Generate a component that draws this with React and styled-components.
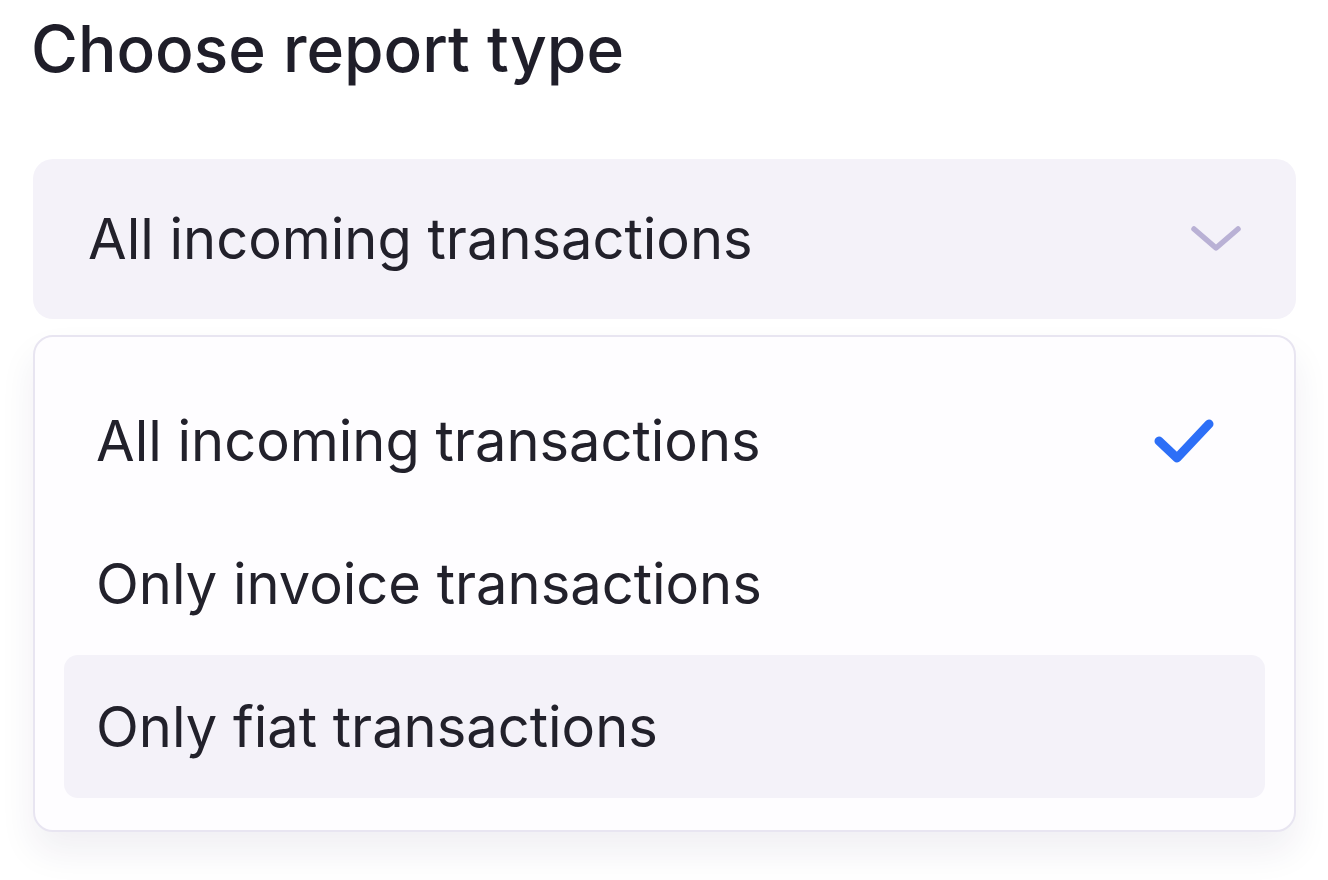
import styled, { createGlobalStyle } from 'styled-components'

const Global = createGlobalStyle`
  body {
    margin: 0;
    background: #ffffff;
    font-family: Inter, "Noto Sans", sans-serif;
    color: #22212b;
  }
`

const Page = styled.div`
  padding: 10px 32px 60px 33px;
  width: 1263px;
`

const Title = styled.h1`
  margin: 0 0 72px -2px;
  font-size: 64px;
  line-height: 77px;
  font-weight: 500;
  color: #1f1e29;
  letter-spacing: 0;
`

const Select = styled.div`
  display: flex;
  align-items: center;
  justify-content: space-between;
  height: 160px;
  padding: 0 54px 0 55px;
  border-radius: 20px;
  background: #f4f2f9;
  font-size: 56px;
`

const Menu = styled.div`
  margin-top: 16px;
  padding: 32px 29px;
  border: 2px solid #e8e5f1;
  border-radius: 20px;
  background: #fefdff;
  box-shadow: 0 20px 36px rgba(40, 30, 90, 0.07);
`

const Item = styled.div`
  display: flex;
  align-items: center;
  justify-content: space-between;
  height: 143px;
  padding: 0 51px 0 32px;
  border-radius: 14px;
  font-size: 56px;
  background: ${p => (p.$hover ? '#f4f2f9' : 'transparent')};
`

const Chevron = () => (
  <svg width="52" height="28" viewBox="0 0 52 28" fill="none">
    <path d="M4 4 L26 23 L48 4" stroke="#b9b1d5" strokeWidth="5.5" strokeLinecap="round" strokeLinejoin="round" />
  </svg>
)

const Check = () => (
  <svg width="60" height="44" viewBox="0 0 60 44" fill="none">
    <path d="M5 22 L23 39 L55 5" stroke="#2d6ff7" strokeWidth="9" strokeLinecap="round" strokeLinejoin="round" />
  </svg>
)

const options = [
  { label: 'All incoming transactions', selected: true },
  { label: 'Only invoice transactions' },
  { label: 'Only fiat transactions', hover: true },
]

export default function App() {
  return (
    <Page>
      <Global />
      <Title>Choose report type</Title>
      <Select>
        <span>All incoming transactions</span>
        <Chevron />
      </Select>
      <Menu>
        {options.map(o => (
          <Item key={o.label} $hover={o.hover}>
            <span>{o.label}</span>
            {o.selected && <Check />}
          </Item>
        ))}
      </Menu>
    </Page>
  )
}
